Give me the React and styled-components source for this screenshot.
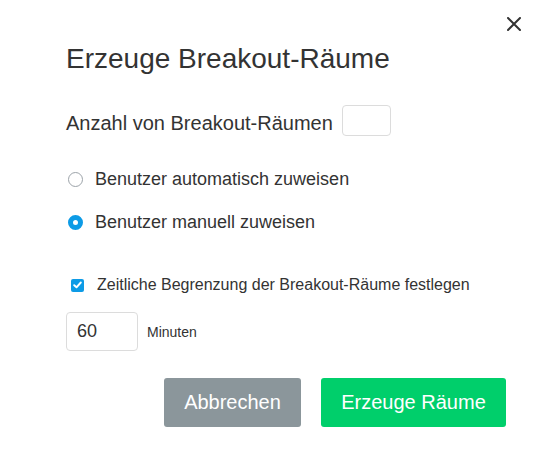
import React, { useState } from "react";
import styled, { createGlobalStyle } from "styled-components";

const GlobalStyle = createGlobalStyle`
  body {
    margin: 0;
    background: #ffffff;
    font-family: "Liberation Sans", Arial, Helvetica, sans-serif;
    color: #333333;
  }
`;

const App = () => {
  const [mode, setMode] = useState("manual");
  const [limit, setLimit] = useState(true);

  return (
    <>
      <GlobalStyle />
      <Dialog>
        <CloseButton aria-label="close">
          <svg width="14" height="14" viewBox="0 0 14 14">
            <path d="M1 1 L13 13 M13 1 L1 13" stroke="#333" strokeWidth="2" strokeLinecap="round" />
          </svg>
        </CloseButton>

        <Title>Erzeuge Breakout-Räume</Title>

        <CountRow>
          <CountLabel>Anzahl von Breakout-Räumen</CountLabel>
          <CountInput />
        </CountRow>

        <RadioGroup>
          <RadioRow onClick={() => setMode("auto")}>
            <Radio checked={mode === "auto"} />
            <RadioLabel>Benutzer automatisch zuweisen</RadioLabel>
          </RadioRow>
          <RadioRow onClick={() => setMode("manual")}>
            <Radio checked={mode === "manual"} />
            <RadioLabel>Benutzer manuell zuweisen</RadioLabel>
          </RadioRow>
        </RadioGroup>

        <CheckRow onClick={() => setLimit(!limit)}>
          <Checkbox checked={limit}>
            {limit && (
              <svg width="9" height="8" viewBox="0 0 9 8">
                <path d="M1.2 4.2 L3.5 6.3 L7.8 1.5" stroke="#fff" strokeWidth="1.9" fill="none" strokeLinecap="round" strokeLinejoin="round" />
              </svg>
            )}
          </Checkbox>
          <CheckLabel>Zeitliche Begrenzung der Breakout-Räume festlegen</CheckLabel>
        </CheckRow>

        <MinutesRow>
          <MinutesInput defaultValue="60" />
          <MinutesLabel>Minuten</MinutesLabel>
        </MinutesRow>

        <Actions>
          <Button variant="cancel">Abbrechen</Button>
          <Button variant="confirm">Erzeuge Räume</Button>
        </Actions>
      </Dialog>
    </>
  );
};

const Dialog = styled.div`
  position: relative;
  width: 538px;
  height: 459px;
  box-sizing: border-box;
  padding: 43px 32px 0 66px;
  display: flex;
  flex-direction: column;
`;

const CloseButton = styled.button`
  position: absolute;
  top: 17px;
  right: 17px;
  width: 14px;
  height: 14px;
  padding: 0;
  border: none;
  background: none;
  display: flex;
  cursor: pointer;
`;

const Title = styled.h2`
  margin: 0;
  font-size: 28px;
  line-height: 32px;
  font-weight: 400;
  color: #333;
`;

const CountRow = styled.div`
  margin-top: 30px;
  display: flex;
  align-items: flex-end;
  gap: 9px;
`;

const CountLabel = styled.span`
  font-size: 20px;
  line-height: 24px;
  margin-bottom: 1px;
`;

const CountInput = styled.input`
  width: 49px;
  height: 31px;
  box-sizing: border-box;
  border: 1px solid #dcdcdc;
  border-radius: 4px;
  padding: 0 6px;
  font-family: inherit;
  font-size: 18px;
  outline: none;
`;

const RadioGroup = styled.div`
  margin-top: 32px;
  display: flex;
  flex-direction: column;
  gap: 21px;
`;

const RadioRow = styled.label`
  display: flex;
  align-items: center;
  cursor: pointer;
`;

const Radio = styled.span`
  width: 15px;
  height: 15px;
  margin-left: 2px;
  box-sizing: border-box;
  border-radius: 50%;
  border: ${p => (p.checked ? "5px solid #0d9be6" : "1px solid #9ca3a9")};
  background: #fff;
  flex-shrink: 0;
`;

const RadioLabel = styled.span`
  margin-left: 12px;
  font-size: 18px;
  line-height: 22px;
`;

const CheckRow = styled.label`
  margin-top: 42px;
  display: flex;
  align-items: center;
  cursor: pointer;
`;

const Checkbox = styled.span`
  width: 13px;
  height: 13px;
  margin-left: 5px;
  border-radius: 2px;
  background: ${p => (p.checked ? "#0d9be6" : "#fff")};
  border: ${p => (p.checked ? "none" : "1px solid #9ca3a9")};
  display: flex;
  align-items: center;
  justify-content: center;
  flex-shrink: 0;
`;

const CheckLabel = styled.span`
  margin-left: 13px;
  font-size: 16px;
  line-height: 20px;
`;

const MinutesRow = styled.div`
  margin-top: 17px;
  display: flex;
  align-items: center;
  gap: 9px;
`;

const MinutesInput = styled.input`
  width: 72px;
  height: 39px;
  box-sizing: border-box;
  border: 1px solid #dcdcdc;
  border-radius: 4px;
  padding: 0 10px;
  font-family: inherit;
  font-size: 18px;
  color: #333;
  outline: none;
`;

const MinutesLabel = styled.span`
  font-size: 14px;
`;

const Actions = styled.div`
  margin-top: 27px;
  display: flex;
  justify-content: flex-end;
  gap: 20px;
`;

const Button = styled.button`
  height: 49px;
  padding: 0 20px;
  border: none;
  border-radius: 3px;
  font-family: inherit;
  font-size: 20px;
  color: #fff;
  cursor: pointer;
  background: ${p => (p.variant === "confirm" ? "#00cf6b" : "#8b969b")};
  min-width: ${p => (p.variant === "confirm" ? "185px" : "137px")};
`;

export default App;
